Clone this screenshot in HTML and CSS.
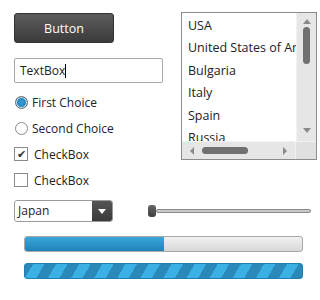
FILE: index.html
```html
<!DOCTYPE html>
<html lang="en">
<head>
  <meta charset="utf-8">
  <title>Controls</title>
  <link rel="stylesheet" href="styles.css">
</head>
<body>
  <div class="page">
    <div class="top">
      <div class="left">
        <button class="btn">Button</button>
        <div class="textbox">TextBox<span class="caret"></span></div>

        <div class="choices">
          <div class="choice"><span class="radio on"></span>First Choice</div>
          <div class="choice"><span class="radio"></span>Second Choice</div>
          <div class="choice"><span class="check on">&#10004;</span>CheckBox</div>
          <div class="choice"><span class="check"></span>CheckBox</div>
        </div>
      </div>

      <!-- list box with both scrollbars -->
      <div class="listbox">
        <div class="list-body">
          <ul class="items">
            <li>USA</li>
            <li>United States of America</li>
            <li>Bulgaria</li>
            <li>Italy</li>
            <li>Spain</li>
            <li>Russia</li>
          </ul>
          <div class="vscroll">
            <span class="arr up"></span>
            <span class="vthumb"></span>
            <span class="arr down"></span>
          </div>
        </div>
        <div class="list-foot">
          <div class="hscroll">
            <span class="arr left"></span>
            <span class="hthumb"></span>
            <span class="arr right"></span>
          </div>
          <div class="corner"></div>
        </div>
      </div>
    </div>

    <div class="controls">
      <div class="combo">
        <span class="combo-text">Japan</span>
        <span class="combo-btn"><span class="arr down white"></span></span>
      </div>
      <div class="slider">
        <span class="thumb"></span>
        <span class="track"></span>
      </div>
    </div>

    <div class="progress"><div class="fill" style="width:50%"></div></div>
    <div class="progress striped"></div>
  </div>
</body>
</html>
```

FILE: styles.css
```css
body{margin:0;font-family:"Open Sans","Noto Sans",Arial,sans-serif;font-size:12px;color:#222;background:#fff}
.page{padding:12px 3px 0 14px}
.top{display:flex;justify-content:space-between}
.left{width:150px}

.btn{display:block;width:100px;height:30px;margin-top:1px;border:1px solid #333;border-radius:3px;
  background:linear-gradient(#5c5c5c,#3b3b3b);color:#fff;font-family:inherit;font-size:12.5px;padding:0}
.textbox{margin-top:15px;border:1px solid #a8a8a8;border-radius:2px;
  line-height:23px;padding:0 0 0 5px;box-sizing:border-box;width:149px;height:25px;color:#222}
.caret{display:inline-block;width:1px;height:14px;background:#000;vertical-align:-3px}

.choices{margin-top:6px}
.choice{display:flex;align-items:center;height:26px;gap:4px}
.radio{width:11px;height:11px;border:1px solid #8a8a8a;border-radius:50%;background:#fff;margin-left:1px}
.radio.on{background:radial-gradient(circle,#3a9fd6 0,#1f7fb8 70%);border-color:#6a6a6a;box-shadow:inset 0 0 0 1px #cfe6f4}
.check{width:12px;height:12px;border:1px solid #8a8a8a;background:#fff;font-size:11px;line-height:12px;text-align:center;color:#333;margin-right:2px}

.listbox{width:134px;height:146px;border:1px solid #8c8c8c;display:flex;flex-direction:column}
.list-body{flex:1;display:flex;overflow:hidden}
.items{list-style:none;margin:0;padding:2px 0 0 6px;flex:1;overflow:hidden;white-space:nowrap;font-size:12.5px}
.items li{height:22.4px;line-height:22px}
.vscroll{width:19px;background:#e6e6e6;border-left:1px solid #f2f2f2;display:flex;flex-direction:column;align-items:center}
.vthumb{width:7px;height:37px;border-radius:4px;background:#707070;margin-top:3px}
.list-foot{height:17px;display:flex;border-top:1px solid #f2f2f2}
.hscroll{flex:1;background:#e6e6e6;display:flex;align-items:center}
.hthumb{width:46px;height:7px;border-radius:4px;background:#707070;margin-left:8px}
.corner{width:20px;background:#e0e0e0;border-left:1px solid #f2f2f2}

.arr{width:0;height:0;border:4px solid transparent}
.arr.up{border-bottom:5px solid #8a8a8a;border-top:0;margin-top:6px}
.arr.down{border-top:5px solid #8a8a8a;border-bottom:0;margin-top:auto;margin-bottom:8px}
.arr.left{border-right:4px solid #8a8a8a;border-left:0;margin-left:8px}
.arr.right{border-left:4px solid #8a8a8a;border-right:0;margin-left:auto;margin-right:8px}
.arr.white{border-top-color:#fff;margin:0}

.controls{display:flex;align-items:center;margin-top:7px;height:22px}
.combo{width:99px;height:22px;display:flex;border:1px solid #9a9a9a;border-radius:3px;box-sizing:border-box;overflow:hidden}
.combo-text{flex:1;padding-left:3px;line-height:20px}
.combo-btn{width:20px;background:linear-gradient(#555,#3a3a3a);display:flex;align-items:center;justify-content:center}
.slider{display:flex;align-items:center;margin-left:35px;width:163px}
.thumb{width:8px;height:12px;border-radius:3px;background:linear-gradient(#666,#3f3f3f)}
.track{flex:1;height:2px;border:1px solid #8a8a8a;background:#c8c8c8;border-radius:2px}

.progress{margin:14px 0 0 10px;width:277px;height:14px;border:1px solid #a8a8a8;border-radius:3px;
  background:linear-gradient(#f0f0f0,#d8d8d8);overflow:hidden}
.fill{height:100%;background:linear-gradient(#38a6da,#1f83b8)}
.striped{margin-top:11px;border-color:#1f7fb0;
  background:repeating-linear-gradient(-60deg,#2a89b9 0,#2a89b9 10px,#3bb0e4 10px,#3bb0e4 20px)}
```
